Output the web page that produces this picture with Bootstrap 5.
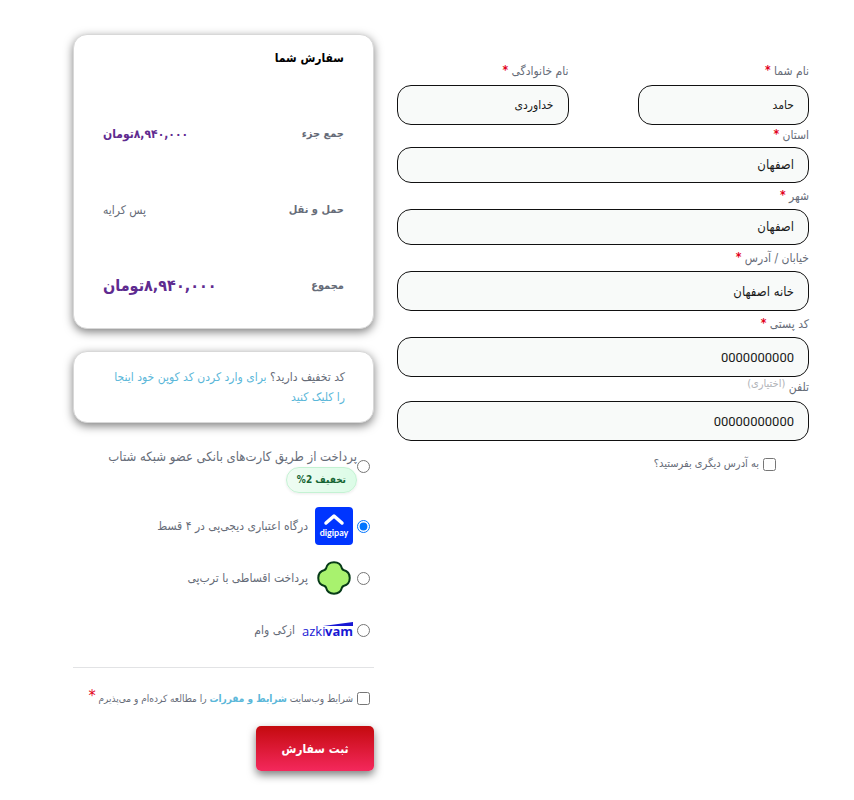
<!DOCTYPE html>
<html lang="fa" dir="rtl">
<head>
<meta charset="utf-8">
<meta name="viewport" content="width=device-width, initial-scale=1">
<title>سفارش شما</title>
<link rel="stylesheet" href="https://cdn.jsdelivr.net/npm/bootstrap@5.3.0/dist/css/bootstrap.min.css">
<style>
body{font-family:"DejaVu Sans Condensed","DejaVu Sans",sans-serif;font-size:12px;line-height:20px;color:#666c78;background:#fff}
.checkout{padding:34px 45px 28px 73px;display:grid;grid-template-columns:412fr 301fr;gap:23px;align-items:start}
.billing{padding-top:27px}
.names{display:grid;grid-template-columns:1fr 1fr;column-gap:69px}
.field label{display:block;height:24px;line-height:20px;font-size:12px}
.field.tight label{height:22px}
.field.spaced label{height:26px;line-height:26px}
.req{color:#e2001a;font-weight:700;font-size:12px;line-height:1;vertical-align:1px}
.opt{color:#b0b3b8;font-size:11px;line-height:1;vertical-align:4px}
.field .form-control,.field .pick{display:block;width:100%;height:40px;border:1px solid #111;border-radius:14px;background:#f8faf9;color:#1a1a1a;padding:0 14px;font-size:13px;line-height:20px}
.field .pick{height:36px;appearance:none}
.field .form-control.short{font-size:12px}
.field .form-control.digits{font-family:Roboto,sans-serif;font-size:13px}
input[type=radio],input[type=checkbox]{width:13px;height:13px;margin:0;flex:none}
.other{margin:13px 33px 0 0;font-size:11px}
.panel{border:1px solid #d8d8d8;border-radius:14px;background:#fff;box-shadow:0 3px 10px rgba(0,0,0,.5)}
.summary{padding:13px 29px 0;min-height:295px}
.summary h2{font-size:12px;line-height:20px;font-weight:700;color:#000;margin:0}
.totals{width:100%;margin-top:28px}
.totals th,.totals td{height:76px;padding:0;vertical-align:middle}
.totals th{font-weight:700;text-align:right;font-size:11px}
.totals td{text-align:left}
.price{color:#5f2b90;font-weight:700;font-size:12px}
.price.total{font-size:16px}
.coupon{margin-top:22px;padding:15px 28px}
a{color:#5bb7d9;text-decoration:none}
.pays{margin-top:21px;padding:0 4px;font-size:12px}
.pay{display:flex;align-items:center;min-height:52px}
.pay label{display:flex;align-items:center}
.pay .bank{display:block;font-size:13px}
.pay .logo{margin:0 4px 0 7px;flex:none}
.off{display:inline-block;border:1px solid #c4f2d3;border-radius:14px;background:linear-gradient(90deg,#effcf3,#dcfce7);color:#166534;font-weight:700;font-size:10px;line-height:24px;padding:0 10px;box-shadow:0 1px 3px rgba(0,0,0,.08)}
.terms{border-top:1px solid #e2e3e5;padding:20px 4px 0;margin-top:11px;font-size:10px;white-space:nowrap}
.terms .req{font-size:16px;font-weight:400}
.submit{display:block;width:118px;height:45px;margin-top:17px;border:0;border-radius:5px;color:#fff;font-weight:700;font-size:12px;background:linear-gradient(#c40a0e,#f4285c);box-shadow:0 4px 9px rgba(0,0,0,.5)}
@media(max-width:700px){.checkout{grid-template-columns:1fr;padding:20px}}
</style>
<script src="https://cdn.jsdelivr.net/npm/bootstrap@5.3.0/dist/js/bootstrap.bundle.min.js"></script>
</head>
<body>
<form class="checkout">
  <section class="billing">
    <div class="names">
      <div class="field"><label for="fn">نام شما <span class="req">*</span></label><input id="fn" class="form-control short" value="حامد"></div>
      <div class="field"><label for="ln">نام خانوادگی <span class="req">*</span></label><input id="ln" class="form-control short" value="خداوردی"></div>
    </div>
    <div class="field tight"><label for="st">استان <span class="req">*</span></label><select id="st" class="pick"><option>اصفهان</option></select></div>
    <div class="field spaced"><label for="ct">شهر <span class="req">*</span></label><select id="ct" class="pick"><option>اصفهان</option></select></div>
    <div class="field spaced"><label for="ad">خیابان / آدرس <span class="req">*</span></label><input id="ad" class="form-control" value="خانه اصفهان"></div>
    <div class="field spaced"><label for="zip">کد پستی <span class="req">*</span></label><input id="zip" class="form-control digits" value="0000000000"></div>
    <div class="field"><label for="tel">تلفن <span class="opt">(اختیاری)</span></label><input id="tel" class="form-control digits" value="00000000000"></div>
    <div class="other d-flex align-items-center gap-1"><input type="checkbox" id="other"><label for="other">به آدرس دیگری بفرستید؟</label></div>
  </section>
  <section>
    <div class="panel summary">
      <h2>سفارش شما</h2>
      <table class="totals">
        <tr><th scope="row">جمع جزء</th><td class="price">۸,۹۴۰,۰۰۰تومان</td></tr>
        <tr><th scope="row">حمل و نقل</th><td>پس کرایه</td></tr>
        <tr><th scope="row">مجموع</th><td class="price total">۸,۹۴۰,۰۰۰تومان</td></tr>
      </table>
    </div>
    <div class="panel coupon">کد تخفیف دارید؟ <a href="#">برای وارد کردن کد کوپن خود اینجا <br>را کلیک کنید</a></div>
    <div class="pays">
      <div class="pay"><input type="radio" name="pay" id="p1" class="mb-2"><label for="p1" class="bank">پرداخت از طریق کارت‌های بانکی عضو شبکه شتاب <span class="off">تخفیف 2%</span></label></div>
      <div class="pay mt-1"><input type="radio" name="pay" id="p2" checked><label for="p2">
        <svg class="logo" width="38" height="38" viewBox="0 0 38 38"><rect width="38" height="38" rx="4" fill="#0035ff"/><path d="M11 16l8-7 8 7" fill="none" stroke="#fff" stroke-width="3.500" stroke-linecap="round" stroke-linejoin="round"/><text x="19" y="29" direction="ltr" text-anchor="middle" font-family="Lato,sans-serif" font-weight="700" font-size="9" fill="#fff">digipay</text></svg>
        درگاه اعتباری دیجی‌پی در ۴ قسط</label></div>
      <div class="pay"><input type="radio" name="pay" id="p3"><label for="p3">
        <svg class="logo" width="38" height="38" viewBox="0 0 38 38"><path d="M9.500 11Q10.500 10.500 11 9.500C13 1.200 25 1.200 27 9.500Q27.500 10.500 28.500 11C36.800 13 36.800 25 28.500 27Q27.500 27.500 27 28.500C25 36.800 13 36.800 11 28.500Q10.500 27.500 9.500 27C1.200 25 1.200 13 9.500 11Z" fill="#a8f26e" stroke="#073b18" stroke-width="2" stroke-linejoin="round"/></svg>
        پرداخت اقساطی با ترب‌پی</label></div>
      <div class="pay"><input type="radio" name="pay" id="p4"><label for="p4">
        <svg class="logo" width="51" height="18" viewBox="0 0 51 18" direction="ltr" fill="#1717d4" font-family="Open Sans,sans-serif"><path d="M21 5L51 1V5Z"/><text x="0" y="15" font-size="13">azki</text><text x="51" y="15" text-anchor="end" font-weight="700" font-size="13">vam</text></svg>
        ازکی وام</label></div>
    </div>
    <div class="terms d-flex align-items-center gap-1"><input type="checkbox" id="terms"><label for="terms">شرایط وب‌سایت <a href="#"><b>شرایط و مقررات</b></a> را مطالعه کرده‌ام و می‌پذیرم <span class="req">*</span></label></div>
    <button type="button" class="submit">ثبت سفارش</button>
  </section>
</form>
</body>
</html>
